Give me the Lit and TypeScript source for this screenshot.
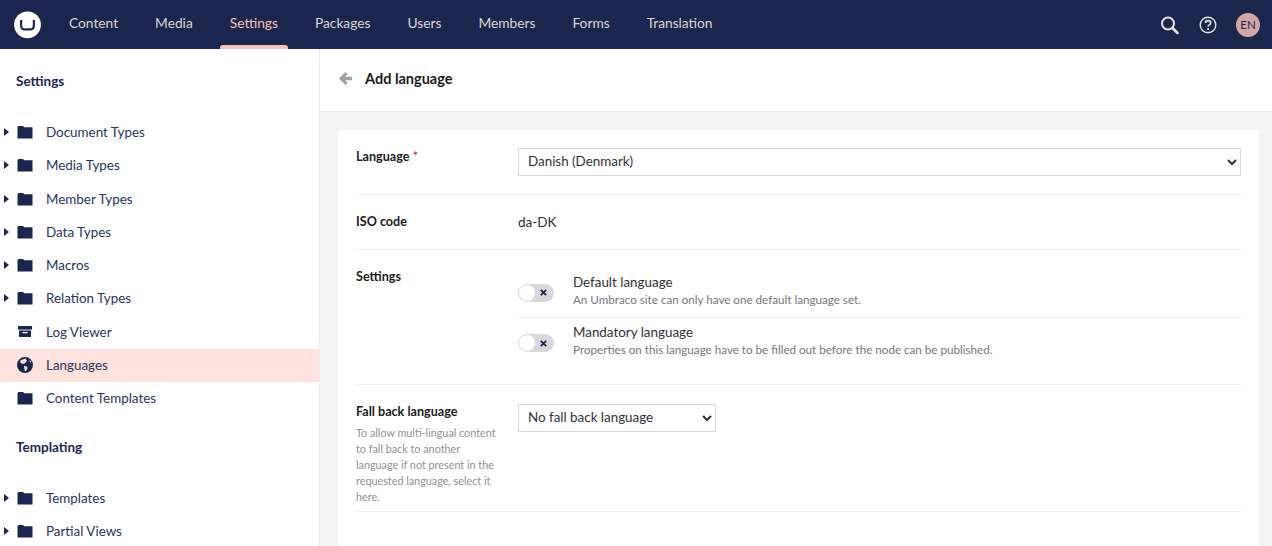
import { LitElement, html, css, svg } from "lit";
import { customElement } from "lit/decorators.js";

const folder = svg`<path d="M.5 3L1.500 2H6L7.200 3.300H15.500V14.500H.5z"/>`;
const archive = svg`<path d="M1 2h14v3.600H1z"/><path d="M2 6.600h12V13H2zm3.800 1.400c-.6 0-.6 1.300 0 1.300h4.400c.6 0 .6-1.300 0-1.300z" fill-rule="evenodd"/>`;
const globe = svg`<path fill-rule="evenodd" d="M8 0a8 8 0 1 0 0 16A8 8 0 0 0 8 0zM3.500 3.300L8.500 1.500l1.500 2.600L8 6.200 5.500 7 3.200 5.500zM7 9l3 .5.500 2-2 3-1-1.500zM12.500 2.800l2 2.300-1.500.5z"/>`;

interface Item { label: string; icon: "folder" | "archive" | "globe"; caret?: boolean; active?: boolean }

const settingsItems: Item[] = [
  { label: "Document Types", icon: "folder", caret: true },
  { label: "Media Types", icon: "folder", caret: true },
  { label: "Member Types", icon: "folder", caret: true },
  { label: "Data Types", icon: "folder", caret: true },
  { label: "Macros", icon: "folder", caret: true },
  { label: "Relation Types", icon: "folder", caret: true },
  { label: "Log Viewer", icon: "archive" },
  { label: "Languages", icon: "globe", active: true },
  { label: "Content Templates", icon: "folder" },
];
const templatingItems: Item[] = [
  { label: "Templates", icon: "folder", caret: true },
  { label: "Partial Views", icon: "folder", caret: true },
];
const tabs = ["Content", "Media", "Settings", "Packages", "Users", "Members", "Forms", "Translation"];

@customElement("app-root")
export class AppRoot extends LitElement {
  static styles = css`
    :host { display: block; width: 1272px; height: 546px; overflow: hidden; font-family: Lato, "Open Sans", sans-serif; color: #1b264f; font-size: 13.500px; background: #fff; }
    * { box-sizing: border-box; }
    .top { height: 49px; background: #1b264f; display: flex; align-items: center; padding-left: 14px; padding-right: 12px; }
    .logo { width: 28px; height: 28px; flex: none; display: block; margin-right: 8.500px; }
    .tabs { display: flex; height: 100%; flex: 1; }
    .tab { position: relative; display: flex; align-items: center; padding: 0 18.500px 4px; color: #d8d7d9; font-size: 13.750px; }
    .tab.on { color: #f5c1bc; }
    .tab.on::after { content: ""; position: absolute; left: 8.500px; right: 8.500px; bottom: 0; height: 4px; background: #f5c1bc; border-radius: 3px 3px 0 0; }
    .tools { display: flex; align-items: center; }
    .tools svg { display: block; }
    .s { margin-right: 19px; }
    .q { margin-right: 19px; }
    .avatar { width: 24px; height: 24px; border-radius: 50%; background: #d4a5a5; color: #1b264f; font-size: 11.500px; display: flex; align-items: center; justify-content: center; }
    .body { display: flex; height: 497px; }
    .side { width: 320px; flex: none; border-right: 1px solid #e9e9eb; background: #fff; overflow: hidden; }
    .side h3 { margin: 0; font-size: 13.500px; font-weight: 700; color: #1b264f; padding-left: 16px; line-height: 20px; }
    .h1 { padding-top: 22px; padding-bottom: 25px; }
    .h2 { padding-top: 22px; padding-bottom: 24.700px; }
    .row { height: 33.250px; display: flex; align-items: center; font-size: 13.400px; color: #2a3358; padding-bottom: 1px; }
    .row.active { background: #ffe1dd; }
    .caret { width: 17px; flex: none; display: flex; padding-left: 4px; }
    .ico { width: 16px; height: 16px; flex: none; fill: #1b264f; }
    .row span { margin-left: 13px; }
    .main { flex: 1; background: #f4f3f3; display: flex; flex-direction: column; min-width: 0; }
    .head { height: 63px; flex: none; background: #fff; border-bottom: 1px solid #e9e9eb; display: flex; align-items: center; padding-left: 19px; padding-bottom: 3px; }
    .head b { font-size: 14.500px; margin-left: 13px; font-weight: 700; color: #1a1a1a; }
    .card { margin: 18px 13px 0 18px; background: #fff; border-radius: 3px 3px 0 0; padding: 0 18px; flex: 1; }
    .f { display: flex; border-bottom: 1px solid #f0f0f0; }
    .lbl { width: 162px; flex: none; font-size: 12.600px; font-weight: 700; color: #1a1a1a; line-height: 18px; }
    .req { color: #d42054; font-weight: 400; font-size: 14px; line-height: 12px; }
    .val { flex: 1; min-width: 0; }
    select { display: block; height: 28px; font-family: inherit; font-size: 13.400px; color: #303033; background: #fff; border: 1px solid #d8d7d9; border-radius: 0; padding: 0 5px 2px; outline: none; }
    .f1 { padding: 18px 0; }
    .f1 select { width: 100%; }
    .f2 { height: 55px; align-items: center; }
    .f2 .val { font-size: 13.500px; color: #303033; }
    .f3 { padding: 18px 0 0; height: 135px; }
    .f3 .val { margin-top: -1px; }
    .opt { display: flex; align-items: center; height: 50px; }
    .opt + .opt { border-top: 1px solid #f0f0f0; }
    .sw { width: 36px; height: 18px; border-radius: 9px; background: #d8d7d9; position: relative; flex: none; margin-right: 19px; margin-top: 1px; }
    .sw::before { content: ""; position: absolute; left: 1px; top: 1px; width: 16px; height: 16px; border-radius: 50%; background: #fff; }
    .sw svg { position: absolute; right: 7px; top: 5.500px; }
    .txt { margin-bottom: 5px; }
    .t { font-size: 13.400px; color: #303033; line-height: 18px; }
    .d { font-size: 11.650px; color: #76757a; line-height: 15px; margin-top: 1px; }
    .f4 { padding: 19px 0 0; height: 127px; }
    .f4 select { width: 198px; }
    .f4 .lbl { margin-top: -1px; }
    .help { display: block; font-size: 10.800px; font-weight: 400; color: #8f8f92; line-height: 16px; margin-top: 4px; width: 146px; }
  `;

  private icon(n: Item["icon"]) {
    return html`<svg class="ico" viewBox="0 0 16 16">${n === "folder" ? folder : n === "archive" ? archive : globe}</svg>`;
  }
  private row(i: Item) {
    return html`<div class="row ${i.active ? "active" : ""}">
      <div class="caret">${i.caret ? html`<svg width="5" height="8" viewBox="0 0 5 8"><path d="M0 0l5 4-5 4z" fill="#1b264f"/></svg>` : ""}</div>
      ${this.icon(i.icon)}<span>${i.label}</span></div>`;
  }
  private opt(t: string, d: string) {
    return html`<div class="opt"><div class="sw"><svg width="7" height="7" viewBox="0 0 7 7"><path d="M.8.8l5.400 5.400M6.200.8L.8 6.200" stroke="#1b264f" stroke-width="1.800" fill="none"/></svg></div>
      <div class="txt"><div class="t">${t}</div><div class="d">${d}</div></div></div>`;
  }
  render() {
    return html`
      <div class="top">
        <svg class="logo" viewBox="0 0 28 28"><circle cx="13.500" cy="13.800" r="13.400" fill="#fff"/><path d="M7.200 9C6.900 13 6.900 15.500 7.700 17 8.200 18 8.900 18.400 10.400 18.400H16.600C18.100 18.400 18.800 18 19.300 17 20.100 15.500 20.100 13 19.800 9" fill="none" stroke="#1b264f" stroke-width="2.200"/></svg>
        <div class="tabs">${tabs.map((t) => html`<div class="tab ${t === "Settings" ? "on" : ""}">${t}</div>`)}</div>
        <div class="tools">
          <svg class="s" width="20" height="20" viewBox="0 0 20 20"><circle cx="8" cy="8.500" r="6" fill="none" stroke="#e4e4e6" stroke-width="2"/><path d="M12.500 13l5 5" stroke="#e4e4e6" stroke-width="2.600" stroke-linecap="round"/></svg>
          <svg class="q" width="18" height="18" viewBox="0 0 18 18"><circle cx="9" cy="9" r="7.800" fill="none" stroke="#e4e4e6" stroke-width="1.400"/><path d="M6.500 7c0-3.200 5.200-3.200 5.200 0 0 1.900-2.600 1.900-2.600 3.700" fill="none" stroke="#e4e4e6" stroke-width="1.700"/><circle cx="9.100" cy="13" r="1.100" fill="#e4e4e6"/></svg>
          <div class="avatar">EN</div>
        </div>
      </div>
      <div class="body">
        <div class="side">
          <h3 class="h1">Settings</h3>
          ${settingsItems.map((i) => this.row(i))}
          <h3 class="h2">Templating</h3>
          ${templatingItems.map((i) => this.row(i))}
        </div>
        <div class="main">
          <div class="head">
            <svg width="13" height="13" viewBox="0 0 13 13"><path d="M6.500 0l2.200 2.200-2.600 2.600H13v3.400H6.100l2.600 2.600-2.200 2.200L0 6.500z" fill="#a2a1a6"/></svg>
            <b>Add language</b>
          </div>
          <div class="card">
            <div class="f f1">
              <div class="lbl">Language <span class="req">*</span></div>
              <div class="val"><select><option>Danish (Denmark)</option></select></div>
            </div>
            <div class="f f2"><div class="lbl">ISO code</div><div class="val">da-DK</div></div>
            <div class="f f3">
              <div class="lbl">Settings</div>
              <div class="val">
                ${this.opt("Default language", "An Umbraco site can only have one default language set.")}
                ${this.opt("Mandatory language", "Properties on this language have to be filled out before the node can be published.")}
              </div>
            </div>
            <div class="f f4">
              <div class="lbl">Fall back language
                <span class="help">To allow multi-lingual content to fall back to another language if not present in the requested language, select it here.</span>
              </div>
              <div class="val"><select><option>No fall back language</option></select></div>
            </div>
          </div>
        </div>
      </div>`;
  }
}
